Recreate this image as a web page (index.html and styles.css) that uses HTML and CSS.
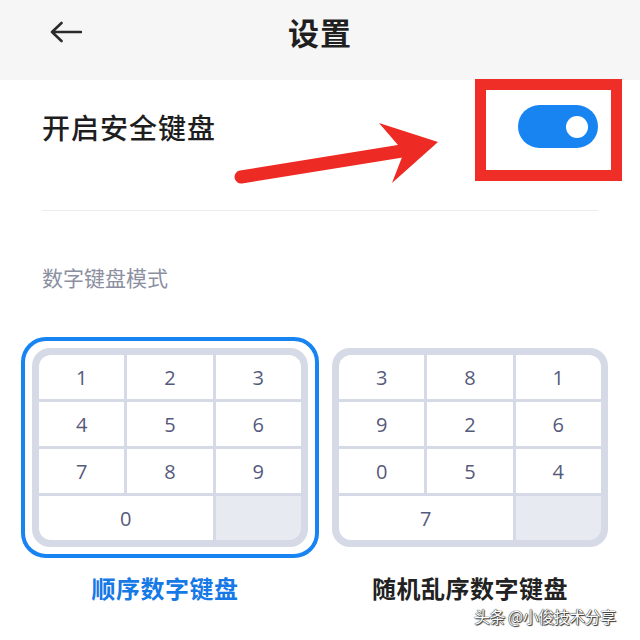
FILE: index.html
```html
<!DOCTYPE html>
<html lang="zh">
<head>
<meta charset="utf-8">
<title>设置</title>
<link rel="stylesheet" href="styles.css">
</head>
<body>
<div class="page">
  <header class="topbar">
    <svg class="back" width="32" height="22" viewBox="0 0 32 22">
      <path d="M2 11H31M11.5 2L2 11L11.5 20" fill="none" stroke="#2b2b2b" stroke-width="2.6" stroke-linecap="round" stroke-linejoin="round"/>
    </svg>
    <h1 class="title">设置</h1>
    <span></span>
  </header>

  <section class="setting-row">
    <span class="setting-name">开启安全键盘</span>
    <span class="toggle"><span class="knob"></span></span>
  </section>

  <div class="section-label">数字键盘模式</div>

  <div class="modes">
    <div class="mode">
      <div class="card selected">
        <div class="frame">
          <div class="keys">
            <span class="key">1</span><span class="key">2</span><span class="key">3</span>
            <span class="key">4</span><span class="key">5</span><span class="key">6</span>
            <span class="key">7</span><span class="key">8</span><span class="key">9</span>
            <span class="key wide">0</span><span class="key blank"></span>
          </div>
        </div>
      </div>
      <div class="mode-name active">顺序数字键盘</div>
    </div>
    <div class="mode">
      <div class="card">
        <div class="frame">
          <div class="keys">
            <span class="key">3</span><span class="key">8</span><span class="key">1</span>
            <span class="key">9</span><span class="key">2</span><span class="key">6</span>
            <span class="key">0</span><span class="key">5</span><span class="key">4</span>
            <span class="key wide">7</span><span class="key blank"></span>
          </div>
        </div>
      </div>
      <div class="mode-name">随机乱序数字键盘</div>
    </div>
  </div>

  <div class="highlight-box"></div>
  <svg class="red-arrow" width="640" height="640" viewBox="0 0 640 640">
    <line x1="241" y1="177" x2="408" y2="150" stroke="#ee2a25" stroke-width="13" stroke-linecap="round"/>
    <polygon points="379,123 438,142 392,183 404,152" fill="#ee2a25"/>
  </svg>
  <div class="watermark">头条 @小俊技术分享</div>
</div>
</body>
</html>
```

FILE: styles.css
```css
html, body {
  margin: 0;
  padding: 0;
  background: #ffffff;
}

body {
  font-family: "Noto Sans CJK SC", "Noto Sans", sans-serif;
  color: #222222;
}

.page {
  position: relative;
  width: 640px;
  height: 640px;
  overflow: hidden;
}

.topbar {
  height: 80px;
  background: #f6f6f6;
  display: grid;
  grid-template-columns: 1fr auto 1fr;
  align-items: center;
  padding: 0 50px 16px 50px;
  box-sizing: border-box;
}

.back {
  display: block;
}

.title {
  margin: 0;
  font-size: 31px;
  font-weight: 700;
  color: #1f1f1f;
  line-height: 40px;
  letter-spacing: 1px;
}

.setting-row {
  margin: 0 42px;
  padding: 25px 0 62px;
  border-bottom: 1px solid #ececec;
  display: flex;
  justify-content: space-between;
  align-items: center;
}

.setting-name {
  font-size: 28px;
  font-weight: 500;
  color: #1e1e1e;
  line-height: 40px;
  letter-spacing: 1px;
}

.toggle {
  width: 80px;
  height: 43px;
  border-radius: 22px;
  background: #1784f2;
  display: flex;
  align-items: center;
  justify-content: flex-end;
  padding-right: 10px;
  box-sizing: border-box;
}

.knob {
  width: 22px;
  height: 22px;
  border-radius: 50%;
  background: #ffffff;
}

.section-label {
  margin: 51px 0 0 42px;
  font-size: 21px;
  line-height: 30px;
  color: #8b8fa0;
}

.modes {
  margin-top: 45px;
  padding: 0 21px;
  display: flex;
  gap: 2px;
}

.mode {
  width: 298px;
  display: flex;
  flex-direction: column;
  align-items: center;
}

.card {
  width: 298px;
  box-sizing: border-box;
  border: 4px solid transparent;
  border-radius: 25px;
  padding: 7px;
}

.card.selected {
  border-color: #1784f2;
}

.frame {
  background: #d6dae7;
  border-radius: 18px;
  padding: 7px;
}

.keys {
  display: grid;
  grid-template-columns: repeat(3, 1fr);
  grid-auto-rows: 44px;
  gap: 3px;
  border-radius: 12px;
  overflow: hidden;
}

.key {
  background: #ffffff;
  display: flex;
  align-items: center;
  justify-content: center;
  font-family: "Open Sans", "Noto Sans", sans-serif;
  font-size: 20px;
  color: #555a7c;
}

.key.wide {
  grid-column: span 2;
}

.key.blank {
  background: #e8eaf2;
}

.mode-name {
  margin-top: 14px;
  font-size: 24px;
  line-height: 32px;
  font-weight: 700;
  color: #222222;
  letter-spacing: 0.5px;
}

.mode-name.active {
  color: #1679e6;
  margin-right: 10px;
}

.highlight-box {
  position: absolute;
  left: 475px;
  top: 79px;
  width: 147px;
  height: 102px;
  box-sizing: border-box;
  border: 11px solid #ee2e27;
}

.red-arrow {
  position: absolute;
  left: 0;
  top: 0;
  pointer-events: none;
}

.watermark {
  position: absolute;
  left: 474px;
  top: 605px;
  font-size: 16px;
  line-height: 22px;
  color: #ffffff;
  text-shadow: 0 0 1px #222, 0 0 1px #222, 1px 1px 1px #333;
  letter-spacing: -0.5px;
}
```
